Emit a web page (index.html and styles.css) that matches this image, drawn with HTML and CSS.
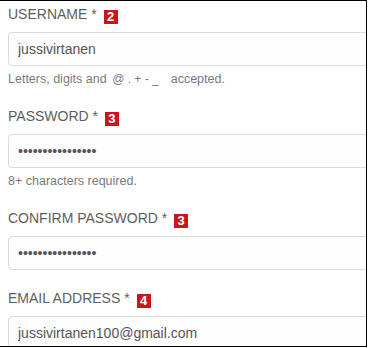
FILE: index.html
```html
<!DOCTYPE html>
<html>
<head>
<meta charset="utf-8">
<link rel="stylesheet" href="styles.css">
</head>
<body>
<div class="frame">
  <div class="group">
    <label class="label">USERNAME * <span class="badge">2</span></label>
    <input class="field" type="text" value="jussivirtanen">
    <div class="help">Letters, digits and <span class="chars">@ . + - _</span>accepted.</div>
  </div>
  <div class="group">
    <label class="label">PASSWORD * <span class="badge">3</span></label>
    <input class="field" type="password" value="abcdefghijklmnop">
    <div class="help">8+ characters required.</div>
  </div>
  <div class="group">
    <label class="label">CONFIRM PASSWORD * <span class="badge">3</span></label>
    <input class="field" type="password" value="abcdefghijklmnop">
  </div>
  <div class="group">
    <label class="label">EMAIL ADDRESS * <span class="badge">4</span></label>
    <input class="field" type="text" value="jussivirtanen100@gmail.com">
  </div>
</div>
</body>
</html>
```
FILE: styles.css
```css
html, body {
  margin: 0;
  padding: 0;
  background: #fff;
}
.frame {
  width: 367px;
  height: 347px;
  box-sizing: border-box;
  border-top: 1px solid #000;
  border-right: 1px solid #000;
  border-bottom: 1px solid #000;
  overflow: hidden;
  padding: 3px 0 0 8px;
  font-family: "Liberation Sans", Arial, sans-serif;
}
.group {
  margin-bottom: 18px;
}
.label {
  display: block;
  font-size: 14px;
  line-height: 20px;
  color: #5e5e5e;
  margin-bottom: 8px;
  white-space: nowrap;
}
.badge {
  display: inline-block;
  width: 14px;
  height: 14px;
  margin-left: 3px;
  background: #c8161d;
  color: #fff;
  font-weight: bold;
  font-size: 13px;
  line-height: 14px;
  text-align: center;
  vertical-align: -2px;
}
.field {
  display: block;
  width: 420px;
  height: 34px;
  box-sizing: border-box;
  margin: 0;
  border: 1px solid #dcdcdc;
  border-radius: 4px;
  padding: 0 9px;
  background: #fdfdfd;
  font-family: "Liberation Sans", Arial, sans-serif;
  font-size: 14px;
  color: #555;
  outline: none;
}
.help {
  margin: 5px 0 2px;
  font-size: 12.5px;
  line-height: 17px;
  color: #7a7a7a;
  white-space: nowrap;
}
.chars {
  font-size: 12px;
  margin-left: 2px;
  margin-right: 12px;
}
```
